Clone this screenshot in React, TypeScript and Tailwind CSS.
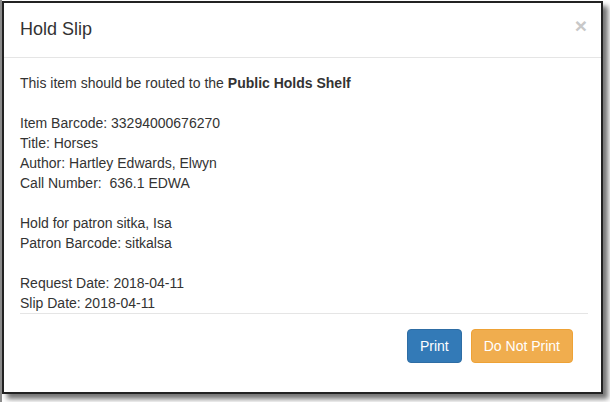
import React from "react";

export default function App() {
  const font = { fontFamily: '"Liberation Sans", Arial, sans-serif' };
  return (
    <div
      className="w-[610px] h-[402px] bg-white overflow-hidden border-l-[2px] border-[#8a8a8a] pt-[1px]"
      style={font}
    >
      <div className="w-[601px] border-[2px] border-[#222] bg-white flex flex-col shadow-[5px_5px_5px_rgba(0,0,0,0.55)] text-[#333]">
        <div className="flex items-start justify-between pl-[16px] pr-[14px] pt-[13px] pb-[15px] border-b border-[#e5e5e5]">
          <h4 className="text-[18px] leading-[26px] font-normal">Hold Slip</h4>
          <button className="text-[21px] leading-none font-bold text-[#c8c8c8] mt-[-1px]">×</button>
        </div>
        <div className="pl-[16px] pr-[13px] pt-[15px] text-[14px] leading-[20px]">
          <div>
            This item should be routed to the <b>Public Holds Shelf</b>
          </div>
          <div className="h-[20px]" />
          <div>Item Barcode: 33294000676270</div>
          <div>Title: Horses</div>
          <div>Author: Hartley Edwards, Elwyn</div>
          <div className="whitespace-pre">Call Number:  636.1 EDWA</div>
          <div className="h-[20px]" />
          <div>Hold for patron sitka, Isa</div>
          <div>Patron Barcode: sitkalsa</div>
          <div className="h-[20px]" />
          <div>Request Date: 2018-04-11</div>
          <div>Slip Date: 2018-04-11</div>
        </div>
        <div className="ml-[16px] mr-[13px] border-t border-[#e5e5e5] pt-[15px] pb-[29px] pr-[15px] flex justify-end gap-[9px]">
          <button className="px-[12px] py-[6px] text-[14px] leading-[20px] text-white bg-[#337ab7] border border-[#2e6da4] rounded-[4px]">
            Print
          </button>
          <button className="px-[12px] py-[6px] text-[14px] leading-[20px] text-white bg-[#f0ad4e] border border-[#eea236] rounded-[4px]">
            Do Not Print
          </button>
        </div>
      </div>
    </div>
  );
}
